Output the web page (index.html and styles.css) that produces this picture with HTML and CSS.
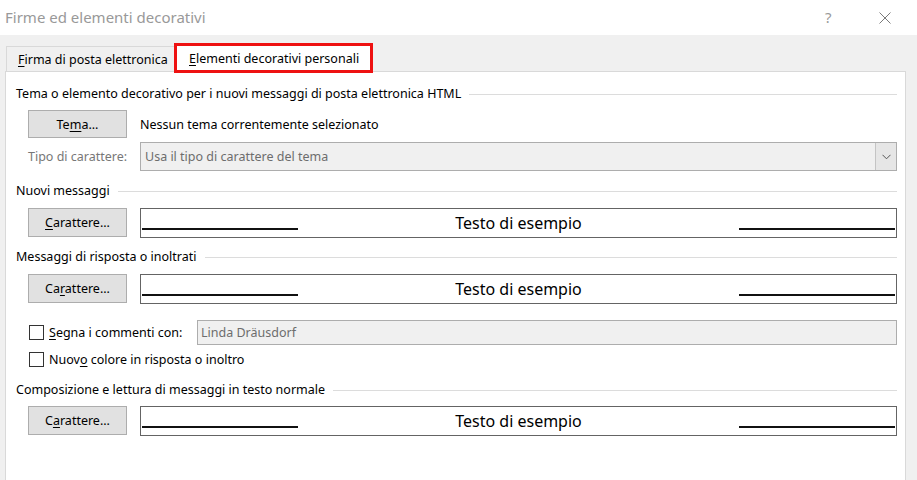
FILE: index.html
```html
<!DOCTYPE html>
<html lang="it">
<head>
<meta charset="utf-8">
<title>Firme ed elementi decorativi</title>
<link rel="stylesheet" href="styles.css">
</head>
<body>
<div class="dialog">
  <header class="titlebar">
    <span class="title">Firme ed elementi decorativi</span>
    <span class="help">?</span>
    <svg class="close" width="12" height="12" viewBox="0 0 12 12"><path d="M0.5 0.5 L11.5 11.5 M11.5 0.5 L0.5 11.5" stroke="#7a7a7a" stroke-width="1" fill="none"/></svg>
  </header>
  <main class="body">
    <nav class="tabs">
      <div class="tab"><u>F</u>irma di posta elettronica</div>
      <div class="tab tab-active"><u>E</u>lementi decorativi personali</div>
    </nav>
    <section class="panel">
      <div class="group-head"><span>Tema o elemento decorativo per i nuovi messaggi di posta elettronica HTML</span></div>
      <div class="row row-theme">
        <button class="btn">Te<u>m</u>a...</button>
        <span class="text">Nessun tema correntemente selezionato</span>
      </div>
      <div class="row row-font">
        <span class="label-dim">Tipo di carattere:</span>
        <div class="select">
          <span class="select-text">Usa il tipo di carattere del tema</span>
          <span class="select-btn"><svg width="9" height="6" viewBox="0 0 9 6"><path d="M0.5 0.8 L4.5 4.8 L8.5 0.8" stroke="#555" stroke-width="1" fill="none"/></svg></span>
        </div>
      </div>

      <div class="group-head gh-2"><span>Nuovi messaggi</span></div>
      <div class="row row-sample rs-1">
        <button class="btn"><u>C</u>arattere...</button>
        <div class="sample"><i class="rule"></i><span class="sample-text">Testo di esempio</span><i class="rule"></i></div>
      </div>

      <div class="group-head gh-3"><span>Messaggi di risposta o inoltrati</span></div>
      <div class="row row-sample rs-2">
        <button class="btn">Ca<u>r</u>attere...</button>
        <div class="sample"><i class="rule"></i><span class="sample-text">Testo di esempio</span><i class="rule"></i></div>
      </div>
      <div class="row row-check1">
        <span class="check"></span>
        <span class="check-label"><u>S</u>egna i commenti con:</span>
        <div class="input">Linda Dräusdorf</div>
      </div>
      <div class="row row-check2">
        <span class="check"></span>
        <span class="check-label">Nuov<u>o</u> colore in risposta o inoltro</span>
      </div>

      <div class="group-head gh-4"><span>Composizione e lettura di messaggi in testo normale</span></div>
      <div class="row row-sample rs-3">
        <button class="btn">C<u>a</u>rattere...</button>
        <div class="sample"><i class="rule"></i><span class="sample-text">Testo di esempio</span><i class="rule"></i></div>
      </div>
    </section>
  </main>
</div>
</body>
</html>
```
FILE: styles.css
```css
* { box-sizing: border-box; }
html, body { margin: 0; padding: 0; }
body {
  width: 917px;
  height: 480px;
  overflow: hidden;
  font-family: "Noto Sans", "Open Sans", sans-serif;
  font-size: 12.5px;
  color: #000;
  background: #f0f0f0;
}
u { text-decoration: underline; text-underline-offset: 2px; }

.dialog { display: flex; flex-direction: column; height: 480px; }

.titlebar {
  height: 35px;
  flex: none;
  background: #fff;
  display: flex;
  align-items: center;
  padding-left: 5px;
}
.title { font-size: 15px; color: #999; flex: 1; margin-top: -1px; }
.help { font-size: 15px; color: #9a9a9a; width: 12px; margin-right: 42px; margin-top: -2px; }
.close { margin-right: 26px; }

.body {
  flex: 1;
  background: #f0f0f0;
  padding: 11px 11px 0 5px;
  display: flex;
  flex-direction: column;
}

.tabs { display: flex; height: 25px; align-items: flex-end; padding-left: 1px; }
.tab {
  height: 25px;
  padding: 0 0 0 11px;
  width: 168px;
  border: 1px solid #d9d9d9;
  border-bottom: none;
  border-right: none;
  background: #f0f0f0;
  line-height: 25px;
  white-space: nowrap;
}
.tab-active {
  position: relative;
  width: 199px;
  height: 30px;
  margin-bottom: -2px;
  margin-top: -3px;
  background: #fff;
  border: 3px solid #ee1111;
  padding-left: 12px;
  line-height: 26px;
  z-index: 2;
}

.panel {
  flex: 1;
  background: #fff;
  border: 1px solid #d9d9d9;
  border-bottom: none;
  padding: 14px 8px 0 10px;
  display: flex;
  flex-direction: column;
}

.group-head {
  display: flex;
  align-items: center;
  height: 16px;
  line-height: 16px;
  white-space: nowrap;
}
.group-head::after {
  content: "";
  flex: 1;
  height: 1px;
  background: #dcdcdc;
  margin-left: 8px;
  margin-top: 1px;
}
.gh-2 { margin-top: 12px; }
.gh-3 { margin-top: 11px; }
.gh-4 { margin-top: 15px; }

.row { display: flex; align-items: center; padding-left: 12px; }
.row-theme { margin-top: 8px; height: 28px; }
.row-font { margin-top: 4px; height: 29px; }
.row-sample { height: 30px; align-items: flex-start; }
.rs-1 { margin-top: 9px; }
.rs-2 { margin-top: 9px; }
.rs-3 { margin-top: 8px; }
.row-check1 { margin-top: 16px; height: 25px; }
.row-check2 { margin-top: 6px; height: 16px; }

.btn {
  width: 99px;
  height: 29px;
  margin: 0;
  padding: 0;
  font: inherit;
  color: #000;
  background: #e1e1e1;
  border: 1px solid #adadad;
  flex: none;
}
.row-theme .btn { height: 28px; }
.text { margin-left: 13px; }
.label-dim { color: #777; width: 112px; flex: none; }

.select {
  flex: 1;
  height: 29px;
  background: #f0f0f0;
  border: 1px solid #adadad;
  display: flex;
  align-items: center;
  padding-left: 4px;
  color: #6d6d6d;
}
.select-text { flex: 1; }
.select-btn {
  width: 21px;
  height: 27px;
  background: #e6e6e6;
  border-left: 1px solid #c4c4c4;
  display: flex;
  align-items: center;
  justify-content: center;
}

.sample {
  margin-left: 13px;
  flex: 1;
  height: 30px;
  border: 1px solid #646464;
  display: grid;
  grid-template-columns: 156px 1fr 156px;
  padding: 0 1px;
}
.rule {
  display: block;
  height: 2px;
  background: #111;
  margin-top: 19px;
}
.sample-text {
  text-align: center;
  font-size: 16px;
  line-height: 28px;
}

.check {
  width: 15px;
  height: 15px;
  border: 1px solid #333;
  background: #fff;
  flex: none;
  margin-left: 1px;
}
.check-label { margin-left: 5px; white-space: nowrap; }
.row-check1 .check-label { width: 148px; flex: none; }
.input {
  flex: 1;
  height: 25px;
  border: 1px solid #adadad;
  background: #f0f0f0;
  color: #6d6d6d;
  display: flex;
  align-items: center;
  padding-left: 3px;
}
```
